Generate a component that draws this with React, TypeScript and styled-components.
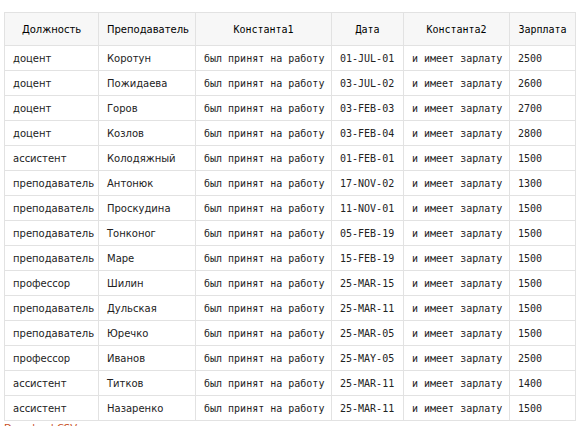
import React from "react";
import styled, { createGlobalStyle } from "styled-components";

const Global = createGlobalStyle`
  html, body { margin: 0; padding: 0; background: #fff; }
  body { font-family: "DejaVu Sans", Verdana, sans-serif; }
`;

const Page = styled.div`
  padding: 12px 7px 0 4px;
`;

const Table = styled.table`
  border-collapse: collapse;
  table-layout: fixed;
  width: 571px;
`;

const Th = styled.th<{ $mono?: boolean; $w: number }>`
  box-sizing: border-box;
  width: ${(p) => p.$w}px;
  height: 33px;
  padding: 0 8px;
  background: #f7f7f7;
  border: 1px solid #e2e2e2;
  font-family: ${(p) => (p.$mono ? '"DejaVu Sans Mono", monospace' : '"DejaVu Sans", sans-serif')};
  font-size: 10px;
  font-weight: normal;
  color: #000;
  text-align: center;
  white-space: nowrap;
`;

const Td = styled.td<{ $mono?: boolean }>`
  box-sizing: border-box;
  height: 25px;
  padding: 0 8px;
  border: 1px solid #e2e2e2;
  font-family: ${(p) => (p.$mono ? '"DejaVu Sans Mono", monospace' : '"DejaVu Sans", sans-serif')};
  font-size: 10px;
  color: #222;
  white-space: nowrap;
`;

const Link = styled.a`
  display: block;
  margin-top: 2px;
  font-family: "DejaVu Sans", sans-serif;
  font-size: 10px;
  color: #c8501e;
  text-decoration: none;
`;

const cols = [
  { title: "Должность", w: 94, mono: false },
  { title: "Преподаватель", w: 97, mono: false },
  { title: "Константа1", w: 136, mono: true },
  { title: "Дата", w: 72, mono: true },
  { title: "Константа2", w: 106, mono: true },
  { title: "Зарплата", w: 66, mono: true },
];

const rows: [string, string, string, string][] = [
  ["доцент", "Коротун", "01-JUL-01", "2500"],
  ["доцент", "Пожидаева", "03-JUL-02", "2600"],
  ["доцент", "Горов", "03-FEB-03", "2700"],
  ["доцент", "Козлов", "03-FEB-04", "2800"],
  ["ассистент", "Колодяжный", "01-FEB-01", "1500"],
  ["преподаватель", "Антонюк", "17-NOV-02", "1300"],
  ["преподаватель", "Проскудина", "11-NOV-01", "1500"],
  ["преподаватель", "Тонконог", "05-FEB-19", "1500"],
  ["преподаватель", "Маре", "15-FEB-19", "1500"],
  ["профессор", "Шилин", "25-MAR-15", "1500"],
  ["преподаватель", "Дульская", "25-MAR-11", "1500"],
  ["преподаватель", "Юречко", "25-MAR-05", "1500"],
  ["профессор", "Иванов", "25-MAY-05", "2500"],
  ["ассистент", "Титков", "25-MAR-11", "1400"],
  ["ассистент", "Назаренко", "25-MAR-11", "1500"],
];

export default function App() {
  return (
    <Page>
      <Global />
      <Table>
        <thead>
          <tr>
            {cols.map((c) => (
              <Th key={c.title} $w={c.w} $mono={c.mono}>
                {c.title}
              </Th>
            ))}
          </tr>
        </thead>
        <tbody>
          {rows.map((r, i) => (
            <tr key={i}>
              <Td>{r[0]}</Td>
              <Td>{r[1]}</Td>
              <Td $mono>был принят на работу</Td>
              <Td $mono>{r[2]}</Td>
              <Td $mono>и имеет зарлату</Td>
              <Td $mono>{r[3]}</Td>
            </tr>
          ))}
        </tbody>
      </Table>
      <Link href="#">Download CSV</Link>
    </Page>
  );
}
